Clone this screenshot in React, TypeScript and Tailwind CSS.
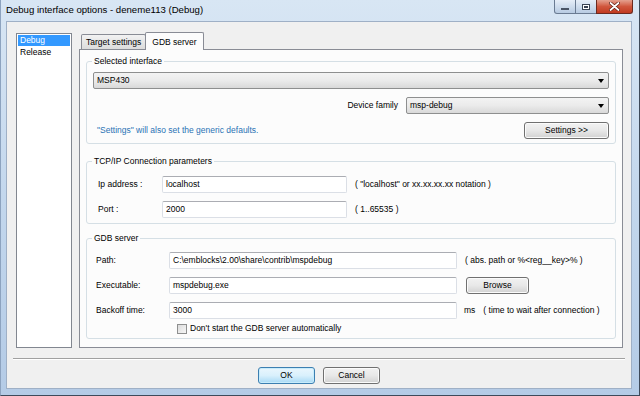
import React from "react";

const font = { fontFamily: '"Liberation Sans", Arial, sans-serif' };

function Combo({ text, className }: { text: string; className?: string }) {
  return (
    <div
      className={
        "h-[17px] flex items-center justify-between rounded-[2px] border border-[#8e8f8f] bg-gradient-to-b from-[#f3f3f3] via-[#ebebeb] to-[#d9d9d9] pl-[3px] pr-[4px] " +
        (className || "")
      }
    >
      <span>{text}</span>
      <svg width="6" height="4" viewBox="0 0 6 4">
        <path d="M0 0 H6 L3 4 Z" fill="#000" />
      </svg>
    </div>
  );
}

function Button({ text, className }: { text: string; className?: string }) {
  return (
    <div
      className={
        "h-[17px] flex items-center justify-center rounded-[3px] border border-[#707070] bg-gradient-to-b from-[#f2f2f2] via-[#e8e8e8] to-[#d2d2d2] shadow-[inset_0_0_0_1px_#fbfbfb] " +
        (className || "")
      }
    >
      {text}
    </div>
  );
}

function Input({ value, className }: { value: string; className?: string }) {
  return (
    <div
      className={
        "h-[17px] flex items-center rounded-[2px] border border-[#dbdfe6] border-t-[#abadb3] bg-white pl-[3px] " +
        (className || "")
      }
    >
      {value}
    </div>
  );
}

function Group({
  label,
  children,
  className,
}: {
  label: string;
  children: React.ReactNode;
  className?: string;
}) {
  return (
    <div className={"relative rounded-[3px] border border-[#d5dfe5] " + (className || "")}>
      <div className="absolute -top-[6px] left-[5px] bg-[#fcfcfc] px-[2px] leading-[10px]">
        {label}
      </div>
      {children}
    </div>
  );
}

export default function App() {
  return (
    <div
      className="w-[640px] h-[396px] flex flex-col bg-gradient-to-b from-[#d8e6f4] via-[#c3d7ed] to-[#b4cbe6] border-l border-l-[#8da3bf] border-r border-r-[#3e4a5a] border-b border-b-[#3e4a5a] text-[8.5px] text-black overflow-hidden"
      style={font}
    >
      {/* Title bar */}
      <div className="h-[21px] flex items-start shrink-0">
        <div className="pl-[5px] pt-[4px] text-[9.6px] leading-[12px] text-black">
          Debug interface options - deneme113 (Debug)
        </div>
        <div className="ml-auto mr-[6px] flex h-[14px]">
          <div className="w-[22px] h-[14px] rounded-bl-[3px] border border-t-0 border-[#6a7b92] bg-gradient-to-b from-[#e6eef8] to-[#b8cbe2] flex items-end justify-center pb-[3px]">
            <div className="w-[8px] h-[2px] bg-white border border-[#4a5566]" />
          </div>
          <div className="w-[20px] h-[14px] border-b border-[#6a7b92] bg-gradient-to-b from-[#e6eef8] to-[#b8cbe2] flex items-center justify-center">
            <div className="w-[8px] h-[6px] border border-[#3a4454] bg-white flex items-center justify-center">
              <div className="w-[4px] h-[2px] border border-[#3a4454]" />
            </div>
          </div>
          <div className="w-[37px] h-[14px] rounded-br-[3px] border border-t-0 border-[#6b2a20] bg-gradient-to-b from-[#e4a08f] via-[#d0563d] to-[#c13a20] flex items-center justify-center">
            <svg width="11" height="9" viewBox="0 0 11 9">
              <path d="M1.5 1 L9.5 8 M9.5 1 L1.5 8" stroke="#5a1a10" strokeWidth="3.2" strokeLinecap="round" />
              <path d="M1.5 1 L9.5 8 M9.5 1 L1.5 8" stroke="#ffffff" strokeWidth="1.8" strokeLinecap="round" />
            </svg>
          </div>
        </div>
      </div>

      {/* Client area */}
      <div className="flex-1 ml-[5px] mr-[7px] mb-[6px] border border-[#9fb0c6] bg-[#f0f0f0] flex flex-col">
        <div className="flex pl-[9px] pt-[10px] gap-[7px]">
          {/* List */}
          <div className="mt-[1px] w-[56px] h-[315px] border border-[#828790] bg-white p-[1px]">
            <div className="h-[11px] bg-[#3399ff] text-white pl-[2px] leading-[11px]">Debug</div>
            <div className="h-[12px] pl-[2px] leading-[12px]">Release</div>
          </div>

          {/* Tabs */}
          <div className="w-[544px] h-[316px] flex flex-col">
            <div className="h-[17px] flex items-end pl-[2px] shrink-0">
              <div className="h-[15px] px-[4px] flex items-center border border-b-0 border-[#898c95] rounded-t-[2px] bg-gradient-to-b from-[#f2f2f2] to-[#dcdcdc]">
                Target settings
              </div>
              <div className="relative z-10 -mb-px h-[18px] px-[6px] -ml-px flex items-start pt-[3px] border border-b-0 border-[#898c95] rounded-t-[2px] bg-[#fcfcfc]">
                GDB server
              </div>
            </div>
            <div className="flex-1 border border-[#898c95] bg-[#fcfcfc] pl-[6px] pr-[6px] pt-[11px] flex flex-col">
              {/* Group 1 */}
              <Group label="Selected interface" className="h-[83px] pt-[10px] px-[6px]">
                <Combo text="MSP430" />
                <div className="mt-[8px] flex items-center justify-end gap-[8px]">
                  <span>Device family</span>
                  <Combo text="msp-debug" className="w-[203px]" />
                </div>
                <div className="mt-[8px] flex items-center justify-between">
                  <span className="pl-[4px] text-[#2a73b5]">"Settings" will also set the generic defaults.</span>
                  <Button text="Settings >>" className="w-[85px]" />
                </div>
              </Group>

              {/* Group 2 */}
              <Group label="TCP/IP Connection parameters" className="mt-[17px] h-[63px] pt-[14px] pl-[11px]">
                <div className="flex items-center">
                  <span className="w-[64px]">Ip address :</span>
                  <Input value="localhost" className="w-[185px]" />
                  <span className="ml-[8px]">( "localhost" or xx.xx.xx.xx notation )</span>
                </div>
                <div className="mt-[8px] flex items-center">
                  <span className="w-[64px]">Port :</span>
                  <Input value="2000" className="w-[185px]" />
                  <span className="ml-[8px]">( 1..65535 )</span>
                </div>
              </Group>

              {/* Group 3 */}
              <Group label="GDB server" className="mt-[14px] h-[101px] pt-[13px] pl-[9px]">
                <div className="flex items-center">
                  <span className="w-[73px]">Path:</span>
                  <Input value="C:\emblocks\2.00\share\contrib\mspdebug" className="w-[288px]" />
                  <span className="ml-[8px]">( abs. path or %&lt;reg__key&gt;% )</span>
                </div>
                <div className="mt-[8px] flex items-center">
                  <span className="w-[73px]">Executable:</span>
                  <Input value="mspdebug.exe" className="w-[288px]" />
                  <Button text="Browse" className="ml-[9px] w-[63px]" />
                </div>
                <div className="mt-[8px] flex items-center">
                  <span className="w-[73px]">Backoff time:</span>
                  <Input value="3000" className="w-[288px]" />
                  <span className="ml-[7px]">ms</span>
                  <span className="ml-[8px]">( time to wait after connection )</span>
                </div>
                <div className="mt-[4px] flex items-center pl-[81px] h-[11px]">
                  <div className="w-[10px] h-[10px] border border-[#8e8f8f] bg-gradient-to-br from-[#dcdcdc] to-[#f6f6f6]" />
                  <span className="ml-[3px]">Don't start the GDB server automatically</span>
                </div>
              </Group>
            </div>
          </div>
        </div>

        {/* Separator */}
        <div className="mt-[10px] mx-[6px] h-[2px] border-t border-[#a0a0a0] border-b border-b-white" />

        {/* Buttons */}
        <div className="mt-[7px] flex justify-center gap-[8px]">
          <div className="w-[57px] h-[17px] flex items-center justify-center rounded-[3px] border border-[#3c7fb1] bg-gradient-to-b from-[#eaf6fd] via-[#d9f0fc] to-[#a7d9f5] shadow-[inset_0_0_0_1px_#c7ecfc]">
            OK
          </div>
          <Button text="Cancel" className="w-[57px]" />
        </div>
      </div>
    </div>
  );
}
